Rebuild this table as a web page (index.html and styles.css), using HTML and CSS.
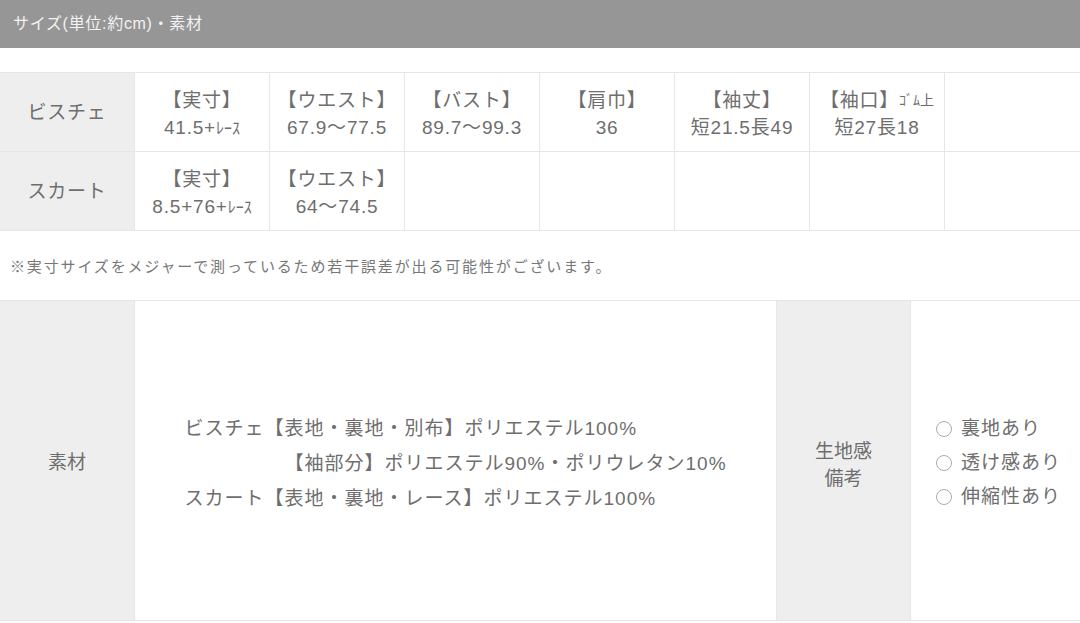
FILE: index.html
```html
<!DOCTYPE html>
<html lang="ja">
<head>
  <meta charset="UTF-8" />
  <title>サイズ・素材</title>
  <link rel="stylesheet" href="styles.css">
</head>
<body>
  <header class="title-bar">サイズ(単位:約cm)・素材</header>

  <!-- size table -->
  <div class="size-table">
    <div class="cell head">ビスチェ</div>
    <div class="cell"><div>【実寸】<br>41.5+<span class="half">ﾚｰｽ</span></div></div>
    <div class="cell"><div>【ウエスト】<br>67.9〜77.5</div></div>
    <div class="cell"><div>【バスト】<br>89.7〜99.3</div></div>
    <div class="cell"><div>【肩巾】<br>36</div></div>
    <div class="cell"><div>【袖丈】<br>短21.5長49</div></div>
    <div class="cell"><div>【袖口】<span class="tiny">ｺﾞﾑ上</span><br>短27長18</div></div>
    <div class="cell"></div>

    <div class="cell head">スカート</div>
    <div class="cell"><div>【実寸】<br>8.5+76+<span class="half">ﾚｰｽ</span></div></div>
    <div class="cell"><div>【ウエスト】<br>64〜74.5</div></div>
    <div class="cell"></div>
    <div class="cell"></div>
    <div class="cell"></div>
    <div class="cell"></div>
    <div class="cell"></div>
  </div>

  <p class="note">※実寸サイズをメジャーで測っているため若干誤差が出る可能性がございます。</p>

  <!-- material table -->
  <div class="material-table">
    <div class="cell head">素材</div>
    <div class="cell">
      <div class="material-text">
        <div>ビスチェ【表地・裏地・別布】ポリエステル100%</div>
        <div class="indent">【袖部分】ポリエステル90%・ポリウレタン10%</div>
        <div>スカート【表地・裏地・レース】ポリエステル100%</div>
      </div>
    </div>
    <div class="cell head small-lh"><div class="remark">生地感<br>備考</div></div>
    <div class="cell">
      <ul class="options">
        <li><span class="circle"></span>裏地あり</li>
        <li><span class="circle"></span>透け感あり</li>
        <li><span class="circle"></span>伸縮性あり</li>
      </ul>
    </div>
  </div>
</body>
</html>
```

FILE: styles.css
```css
body {
  margin: 0;
  background: #fff;
  color: #6e6e6e;
  font-family: "Liberation Sans", "Noto Sans CJK JP", sans-serif;
  font-weight: 400;
}
.title-bar {
  height: 48px;
  line-height: 48px;
  padding-left: 13px;
  background: #969696;
  color: #f2f2f2;
  font-size: 16px;
  letter-spacing: 0.7px;
  margin-bottom: 24px;
}
.size-table {
  display: grid;
  grid-template-columns: repeat(8, 135px);
  grid-auto-rows: 79px;
  border-top: 1px solid #e6e6e6;
  font-size: 19px;
  line-height: 27px;
  letter-spacing: 0.8px;
}
.size-table .cell > div {
  padding-top: 3px;
}
.cell {
  display: flex;
  align-items: center;
  justify-content: center;
  text-align: center;
  border-right: 1px solid #e6e6e6;
  border-bottom: 1px solid #e6e6e6;
  white-space: nowrap;
}
.cell:last-child,
.size-table .cell:nth-child(8n) {
  border-right: none;
}
.head {
  background: #eee;
}
.half {
  font-family: "Noto Sans CJK JP", sans-serif;
  font-size: 16px;
  letter-spacing: 0;
}
.tiny {
  font-family: "Noto Sans CJK JP", sans-serif;
  font-size: 14px;
  letter-spacing: 0;
  vertical-align: 2px;
}
.note {
  margin: 24px 0 0 10px;
  height: 45px;
  font-size: 15px;
  letter-spacing: 1.85px;
  color: #777;
}
.material-table {
  display: grid;
  grid-template-columns: 135px 642px 134px 169px;
  height: 320px;
  border-top: 1px solid #e6e6e6;
  font-size: 19px;
}
.material-text {
  text-align: left;
  line-height: 35px;
  padding-top: 6px;
  letter-spacing: 1px;
}
.indent {
  padding-left: 100px;
}
.small-lh {
  line-height: 27px;
}
.remark {
  padding-top: 8px;
}
.options {
  list-style: none;
  margin: 0;
  padding: 4px 0 0 6px;
  text-align: left;
  line-height: 34px;
  letter-spacing: 1px;
}
.options li {
  display: flex;
  align-items: center;
}
.circle {
  width: 16px;
  height: 16px;
  border: 1px solid #aaa;
  border-radius: 50%;
  margin-right: 9px;
  box-sizing: border-box;
}
```
